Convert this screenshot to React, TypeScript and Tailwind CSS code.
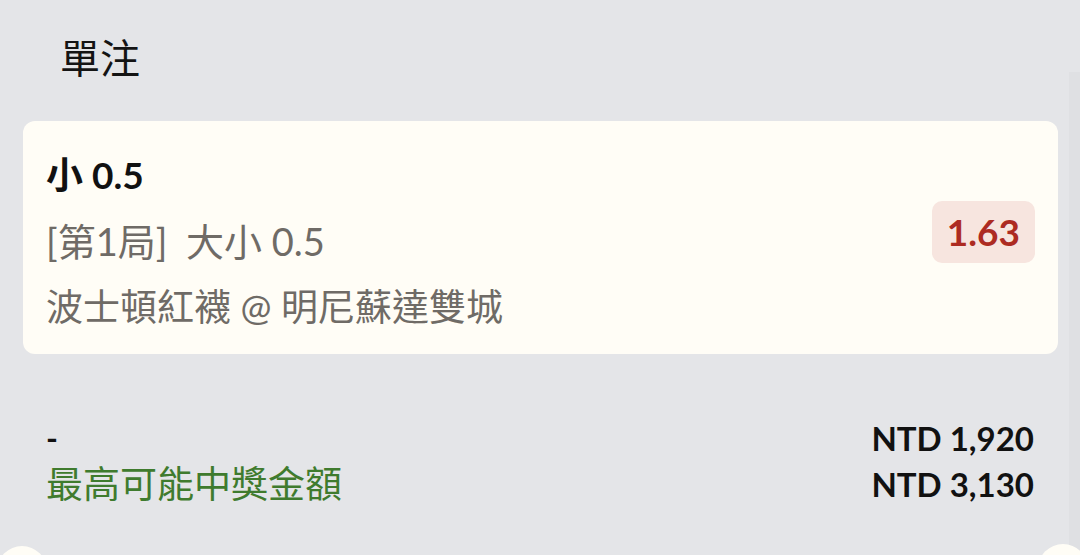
const font = "font-['Lato','Noto_Sans_CJK_TC',sans-serif]";

const BetSlip = () => {
	return (
		<div className={`relative w-[1080px] h-[555px] overflow-hidden bg-[#e4e5e8] ${font}`}>
			<div className="pl-[60px] pt-[34px]">
				<h1 className="text-[40px] leading-[48px] text-[#141414]">單注</h1>
			</div>

			<div className="mx-[23px] w-[1035px] mt-[39px] flex justify-between rounded-[12px] bg-[#fffdf6] pl-[23px] pr-[23px] pt-[21px] pb-[14px]">
				<div className="flex flex-col">
					<p className="text-[37px] leading-[66px] font-bold text-[#111]">小 0.5</p>
					<p className="text-[38px] leading-[66px] text-[#6f6b66]">
						[第1局] <span className="ml-[9px]">大小 0.5</span>
					</p>
					<p className="text-[37px] leading-[66px] text-[#6f6b66]">波士頓紅襪 @ 明尼蘇達雙城</p>
				</div>
				<div className="self-start mt-[59px] h-[62px] flex items-center rounded-[10px] bg-[#f7e5df] px-[15px]">
					<span className="text-[37px] font-bold text-[#ad2b22]">1.63</span>
				</div>
			</div>

			<div className="mt-[61px] pl-[46px] pr-[46px]">
				<div className="flex justify-between items-center leading-[46px]">
					<span className="text-[32px] font-bold text-[#111]">-</span>
					<span className="text-[33px] font-bold text-[#111]">NTD 1,920</span>
				</div>
				<div className="flex justify-between items-center leading-[46px]">
					<span className="text-[37px] text-[#3f7b2e]">最高可能中獎金額</span>
					<span className="text-[33px] font-bold text-[#111]">NTD 3,130</span>
				</div>
			</div>

			{/* scrollbar track */}
			<div className="absolute right-0 top-[72px] bottom-0 w-[11px] bg-[#dfe0e3]" />
			{/* ticket notches */}
			<div className="absolute left-[-3px] top-[546px] w-[50px] h-[50px] rounded-full bg-[#fffdf6]" />
			<div className="absolute left-[1038px] top-[544px] w-[50px] h-[50px] rounded-full bg-[#fffdf6]" />
		</div>
	);
};

export default function App() {
	return <BetSlip />;
}
